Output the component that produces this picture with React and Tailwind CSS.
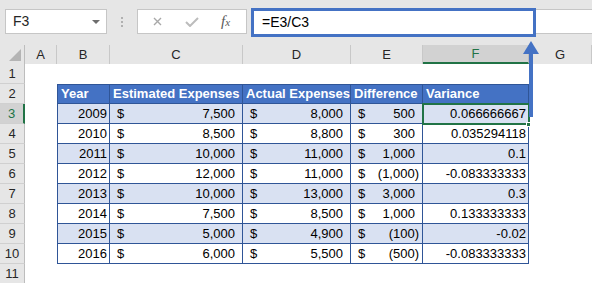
import React from "react";

const rows = [
  { year: 2009, est: "7,500", act: "8,000", diff: "500", neg: false, v: "0.066666667" },
  { year: 2010, est: "8,500", act: "8,800", diff: "300", neg: false, v: "0.035294118" },
  { year: 2011, est: "10,000", act: "11,000", diff: "1,000", neg: false, v: "0.1" },
  { year: 2012, est: "12,000", act: "11,000", diff: "(1,000)", neg: true, v: "-0.083333333" },
  { year: 2013, est: "10,000", act: "13,000", diff: "3,000", neg: false, v: "0.3" },
  { year: 2014, est: "7,500", act: "8,500", diff: "1,000", neg: false, v: "0.133333333" },
  { year: 2015, est: "5,000", act: "4,900", diff: "(100)", neg: true, v: "-0.02" },
  { year: 2016, est: "6,000", act: "5,500", diff: "(500)", neg: true, v: "-0.083333333" },
];

const cols = ["A", "B", "C", "D", "E", "F", "G"];

const RowHead = ({ n, active }) => (
  <div
    className={
      "h-[20px] flex items-center justify-center text-[13px] border-b border-[#d0d0d0] " +
      (active
        ? "bg-[#d2d2d2] text-[#217346] border-r-2 border-r-[#217346]"
        : "bg-[#e6e6e6] text-[#262626] border-r border-r-[#bdbdbd]")
    }
  >
    {n}
  </div>
);

const Money = ({ value, neg, band }) => (
  <div
    className={
      "h-[20px] flex items-center justify-between border-r border-b border-[#2f5597] text-[13px] text-black pl-[7px] " +
      (neg ? "pr-[3px] " : "pr-[7px] ") +
      (band ? "bg-[#d9e1f2]" : "bg-white")
    }
  >
    <span>$</span>
    <span>{value}</span>
  </div>
);

export default function App() {
  return (
    <div className="w-[592px] h-[283px] relative overflow-hidden bg-white font-['Liberation_Sans',Arial,sans-serif]">
      {/* toolbar */}
      <div className="h-[45px] bg-[#e6e6e6] flex items-start pt-[9px]">
        <div className="ml-[5px] w-[102px] h-[25px] bg-white border border-[#c6c6c6] flex items-center justify-between pl-[7px] pr-[6px]">
          <span className="text-[14px] text-[#262626]">F3</span>
          <svg width="8" height="4" viewBox="0 0 8 4">
            <path d="M0 0 L8 0 L4 4 Z" fill="#6d6d6d" />
          </svg>
        </div>
        <div className="w-[30px] h-[25px] flex flex-col items-center justify-center gap-[2px]">
          <div className="w-[2px] h-[2px] bg-[#b0b0b0]" />
          <div className="w-[2px] h-[2px] bg-[#b0b0b0]" />
          <div className="w-[2px] h-[2px] bg-[#b0b0b0]" />
        </div>
        <div className="w-[110px] h-[25px] bg-white border border-[#c6c6c6] flex items-center">
          <svg className="ml-[15px]" width="9" height="9" viewBox="0 0 9 9">
            <path d="M1 1 L8 8 M8 1 L1 8" stroke="#a8a8a8" strokeWidth="1.4" />
          </svg>
          <svg className="ml-[23px]" width="14" height="10" viewBox="0 0 14 10">
            <path d="M1 5 L5 9 L13 1" stroke="#bcbcbc" strokeWidth="2" fill="none" />
          </svg>
          <span className="ml-[22px] italic font-['Liberation_Serif',serif] text-[15px] text-[#595959] leading-none">
            f<span className="text-[11px]">x</span>
          </span>
        </div>
        <div className="ml-[4px] flex-1 h-[25px] bg-white border-y border-[#c6c6c6]" />
      </div>

      {/* formula highlight */}
      <div className="absolute left-[251px] top-[8px] w-[285px] h-[29px] border-[3px] border-[#4472c4] bg-white flex items-center pl-[8px]">
        <span className="text-[14px] text-black">=E3/C3</span>
      </div>

      {/* grid */}
      <div className="grid grid-cols-[25px_32px_53px_133px_108px_72px_106px_1fr]">
        {/* column headers */}
        <div className="h-[19px] bg-[#e6e6e6] border-r border-[#bdbdbd] flex items-end justify-end pr-[3px] pb-[3px]">
          <svg width="12" height="12" viewBox="0 0 12 12">
            <path d="M12 0 L12 12 L0 12 Z" fill="#b4b4b4" />
          </svg>
        </div>
        {cols.map((c) => (
          <div
            key={c}
            className={
              "h-[19px] flex items-center justify-center text-[13px] " +
              (c === "F"
                ? "bg-[#d2d2d2] text-[#217346] border-b-2 border-[#217346] border-r border-r-[#bdbdbd]"
                : "bg-[#e6e6e6] text-[#262626] border-r border-[#c8c8c8]")
            }
          >
            {c}
          </div>
        ))}

        {/* row 1 */}
        <RowHead n={1} />
        <div className="col-span-7 h-[20px]" />

        {/* row 2 header */}
        <RowHead n={2} />
        <div className="h-[20px]" />
        {["Year", "Estimated Expenses", "Actual Expenses", "Difference", "Variance"].map((h, i) => (
          <div
            key={h}
            className={
              "h-[20px] flex items-center bg-[#4472c4] text-white font-bold text-[13px] pl-[3px] border-t border-r border-b border-[#2f5597] whitespace-nowrap " +
              (i === 0 ? "border-l" : "")
            }
          >
            {h}
          </div>
        ))}
        <div className="h-[20px]" />

        {rows.map((r, i) => {
          const band = i % 2 === 0;
          const bg = band ? "bg-[#d9e1f2]" : "bg-white";
          return (
            <React.Fragment key={r.year}>
              <RowHead n={i + 3} active={i === 0} />
              <div className="h-[20px]" />
              <div
                className={
                  "h-[20px] flex items-center justify-end pr-[2px] text-[13px] border-l border-r border-b border-[#2f5597] " +
                  bg
                }
              >
                {r.year}
              </div>
              <Money value={r.est} band={band} />
              <Money value={r.act} band={band} />
              <Money value={r.diff} neg={r.neg} band={band} />
              <div
                className={
                  "h-[20px] flex items-center justify-end pr-[2px] text-[13px] border-r border-b border-[#2f5597] " +
                  bg
                }
              >
                {r.v}
              </div>
              <div className="h-[20px]" />
            </React.Fragment>
          );
        })}

        <RowHead n={11} />
        <div className="col-span-7 h-[20px]" />
      </div>

      {/* selected cell F3 */}
      <div className="absolute left-[422px] top-[103px] w-[108px] h-[22px] border-2 border-[#217346]" />
      <div className="absolute left-[526px] top-[122px] w-[5px] h-[5px] bg-[#217346] border border-white" />

      {/* arrow annotation */}
      <svg className="absolute left-[521px] top-[39px]" width="20" height="80" viewBox="0 0 20 80">
        <path d="M10 2 L18 15 L2 15 Z" fill="#4472c4" />
        <rect x="8" y="14" width="4" height="64" fill="#4472c4" />
      </svg>
    </div>
  );
}
